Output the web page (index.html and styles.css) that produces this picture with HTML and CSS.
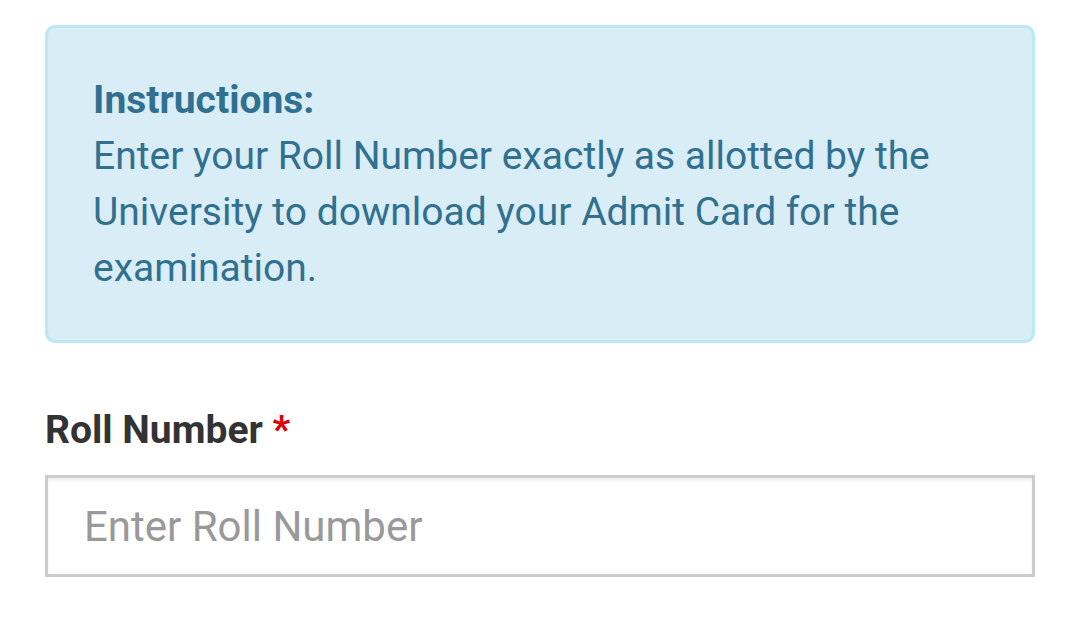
FILE: index.html
```html
<!DOCTYPE html>
<html lang="en">
<head>
<meta charset="utf-8">
<title>Admit Card</title>
<link rel="stylesheet" href="styles.css">
</head>
<body>
<div class="page">
  <div class="alert-info">
    <strong class="alert-title">Instructions:</strong>
    <p class="alert-text">Enter your Roll Number exactly as allotted by the University to download your Admit Card for the examination.</p>
  </div>
  <div class="form-group">
    <label class="field-label" for="roll">Roll Number <span class="required">*</span></label>
    <input class="field-input" id="roll" type="text" placeholder="Enter Roll Number">
  </div>
</div>
</body>
</html>
```

FILE: styles.css
```css
html, body {
  margin: 0;
  padding: 0;
  background: #ffffff;
}
body {
  font-family: Roboto, "Liberation Sans", sans-serif;
}
.page {
  padding: 25px 45px 0 45px;
  display: flex;
  flex-direction: column;
}
.alert-info {
  background: #d9edf7;
  border: 3px solid #bce8f1;
  border-radius: 10px;
  color: #31708f;
  padding: 44px 45px 44px 45px;
  font-size: 39px;
  line-height: 56px;
  display: flex;
  flex-direction: column;
}
.alert-title {
  font-weight: 700;
}
.alert-text {
  margin: 0;
}
.form-group {
  margin-top: 62px;
  display: flex;
  flex-direction: column;
}
.field-label {
  font-size: 39px;
  font-weight: 700;
  color: #333333;
  line-height: 50px;
  margin-bottom: 20px;
}
.required {
  color: #dd0000;
}
.field-input {
  box-sizing: border-box;
  height: 102px;
  border: 3px solid #cccccc;
  border-radius: 0;
  box-shadow: inset 0 3px 3px rgba(0,0,0,0.06);
  padding: 0 36px;
  font-family: Roboto, "Liberation Sans", sans-serif;
  font-size: 42px;
  color: #555;
  outline: none;
}
.field-input::placeholder {
  color: #999999;
}
```
